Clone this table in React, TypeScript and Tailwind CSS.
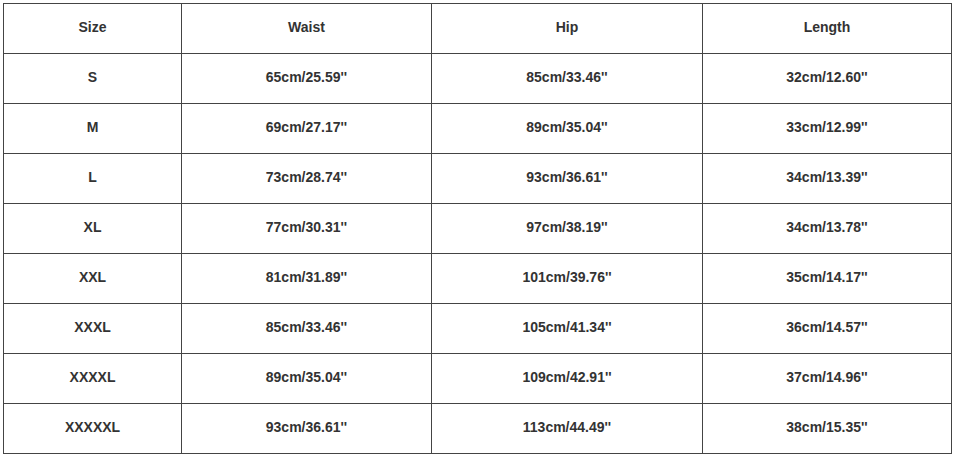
import React from "react";

const rows = [
  ["S", "65cm/25.59''", "85cm/33.46''", "32cm/12.60''"],
  ["M", "69cm/27.17''", "89cm/35.04''", "33cm/12.99''"],
  ["L", "73cm/28.74''", "93cm/36.61''", "34cm/13.39''"],
  ["XL", "77cm/30.31''", "97cm/38.19''", "34cm/13.78''"],
  ["XXL", "81cm/31.89''", "101cm/39.76''", "35cm/14.17''"],
  ["XXXL", "85cm/33.46''", "105cm/41.34''", "36cm/14.57''"],
  ["XXXXL", "89cm/35.04''", "109cm/42.91''", "37cm/14.96''"],
  ["XXXXXL", "93cm/36.61''", "113cm/44.49''", "38cm/15.35''"],
];

const App = () => {
  return (
    <div className="w-[954px] h-[456px] bg-white pt-[3px] pl-[3px]">
      <table className="border-collapse font-['Liberation_Sans',Arial,sans-serif] text-[14px] font-bold text-[#333]">
        <colgroup>
          <col className="w-[178px]" />
          <col className="w-[250px]" />
          <col className="w-[271px]" />
          <col className="w-[249px]" />
        </colgroup>
        <thead>
          <tr className="h-[50px]">
            {["Size", "Waist", "Hip", "Length"].map((h) => (
              <th key={h} className="border border-[#444] text-center font-bold p-0 pb-[2px]">
                {h}
              </th>
            ))}
          </tr>
        </thead>
        <tbody>
          {rows.map((r) => (
            <tr key={r[0]} className="h-[50px]">
              {r.map((c, i) => (
                <td key={i} className="border border-[#444] text-center p-0 pb-[2px]">
                  {c}
                </td>
              ))}
            </tr>
          ))}
        </tbody>
      </table>
    </div>
  );
};

export default App;
